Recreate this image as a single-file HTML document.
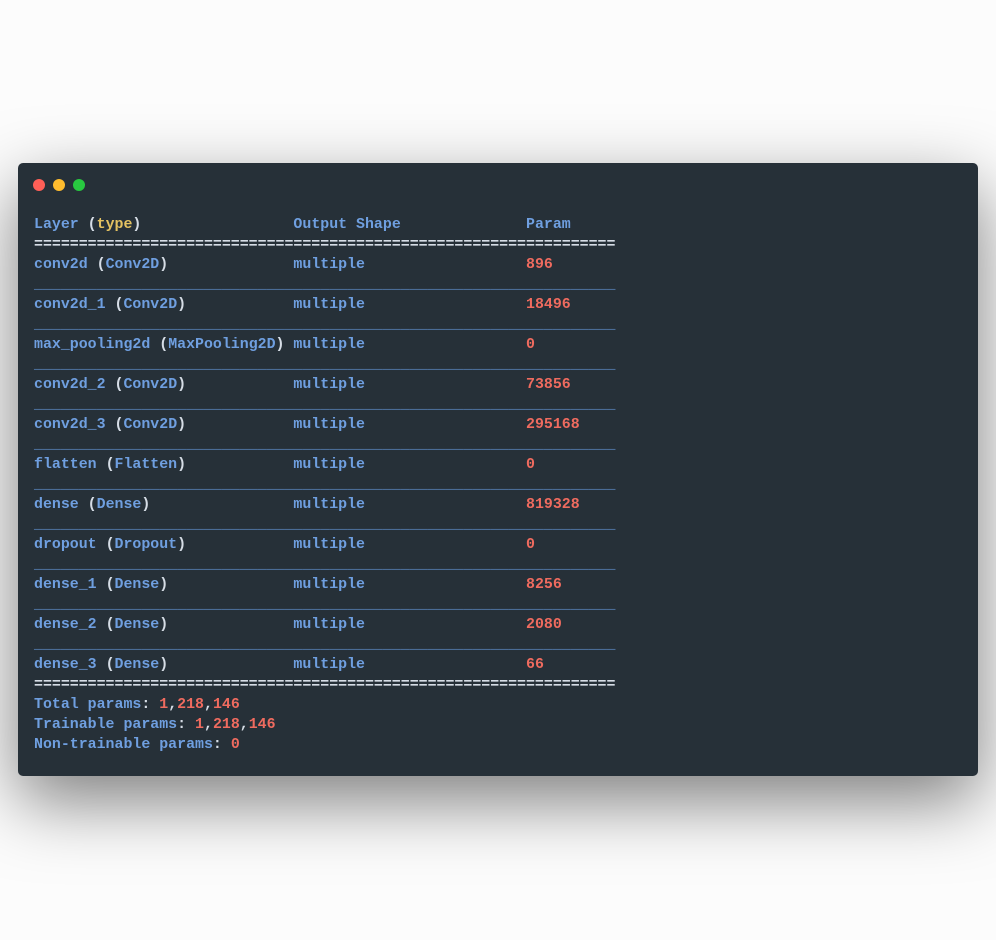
<!DOCTYPE html>
<html><head><meta charset="utf-8"><style>
html,body{margin:0;padding:0;background:#fcfcfc;width:996px;height:940px;overflow:hidden}
.win{position:absolute;left:18px;top:163px;width:960px;height:613px;background:#263038;border-radius:5px;box-shadow:0 25px 70px rgba(0,0,0,0.5)}
.d{position:absolute;top:16px;width:12px;height:12px;border-radius:50%}
pre{position:absolute;left:16px;top:52px;margin:0;font-family:"Liberation Mono","DejaVu Sans Mono",monospace;font-size:14.92px;font-weight:bold;line-height:20px;color:#6f9fe0}
.w{color:#d6dde6}.y{color:#e4c261}.r{color:#ef6b5f}
.u{color:#5f8cc8;letter-spacing:0}
</style></head><body>
<div class="win">
<div class="d" style="left:15px;background:#fe5f57"></div>
<div class="d" style="left:35px;background:#febc2e"></div>
<div class="d" style="left:55px;background:#28c840"></div>
<pre>Layer <span class="w">(</span><span class="y">type</span><span class="w">)</span>                 Output Shape              Param
<span class="w">=================================================================</span>
conv2d <span class="w">(</span>Conv2D<span class="w">)</span>              multiple                  <span class="r">896</span>
<span class="u">_________________________________________________________________</span>
conv2d_1 <span class="w">(</span>Conv2D<span class="w">)</span>            multiple                  <span class="r">18496</span>
<span class="u">_________________________________________________________________</span>
max_pooling2d <span class="w">(</span>MaxPooling2D<span class="w">)</span> multiple                  <span class="r">0</span>
<span class="u">_________________________________________________________________</span>
conv2d_2 <span class="w">(</span>Conv2D<span class="w">)</span>            multiple                  <span class="r">73856</span>
<span class="u">_________________________________________________________________</span>
conv2d_3 <span class="w">(</span>Conv2D<span class="w">)</span>            multiple                  <span class="r">295168</span>
<span class="u">_________________________________________________________________</span>
flatten <span class="w">(</span>Flatten<span class="w">)</span>            multiple                  <span class="r">0</span>
<span class="u">_________________________________________________________________</span>
dense <span class="w">(</span>Dense<span class="w">)</span>                multiple                  <span class="r">819328</span>
<span class="u">_________________________________________________________________</span>
dropout <span class="w">(</span>Dropout<span class="w">)</span>            multiple                  <span class="r">0</span>
<span class="u">_________________________________________________________________</span>
dense_1 <span class="w">(</span>Dense<span class="w">)</span>              multiple                  <span class="r">8256</span>
<span class="u">_________________________________________________________________</span>
dense_2 <span class="w">(</span>Dense<span class="w">)</span>              multiple                  <span class="r">2080</span>
<span class="u">_________________________________________________________________</span>
dense_3 <span class="w">(</span>Dense<span class="w">)</span>              multiple                  <span class="r">66</span>
<span class="w">=================================================================</span>
Total params<span class="w">:</span> <span class="r">1</span><span class="w">,</span><span class="r">218</span><span class="w">,</span><span class="r">146</span>
Trainable params<span class="w">:</span> <span class="r">1</span><span class="w">,</span><span class="r">218</span><span class="w">,</span><span class="r">146</span>
Non-trainable params<span class="w">:</span> <span class="r">0</span></pre>
</div>
</body></html>
